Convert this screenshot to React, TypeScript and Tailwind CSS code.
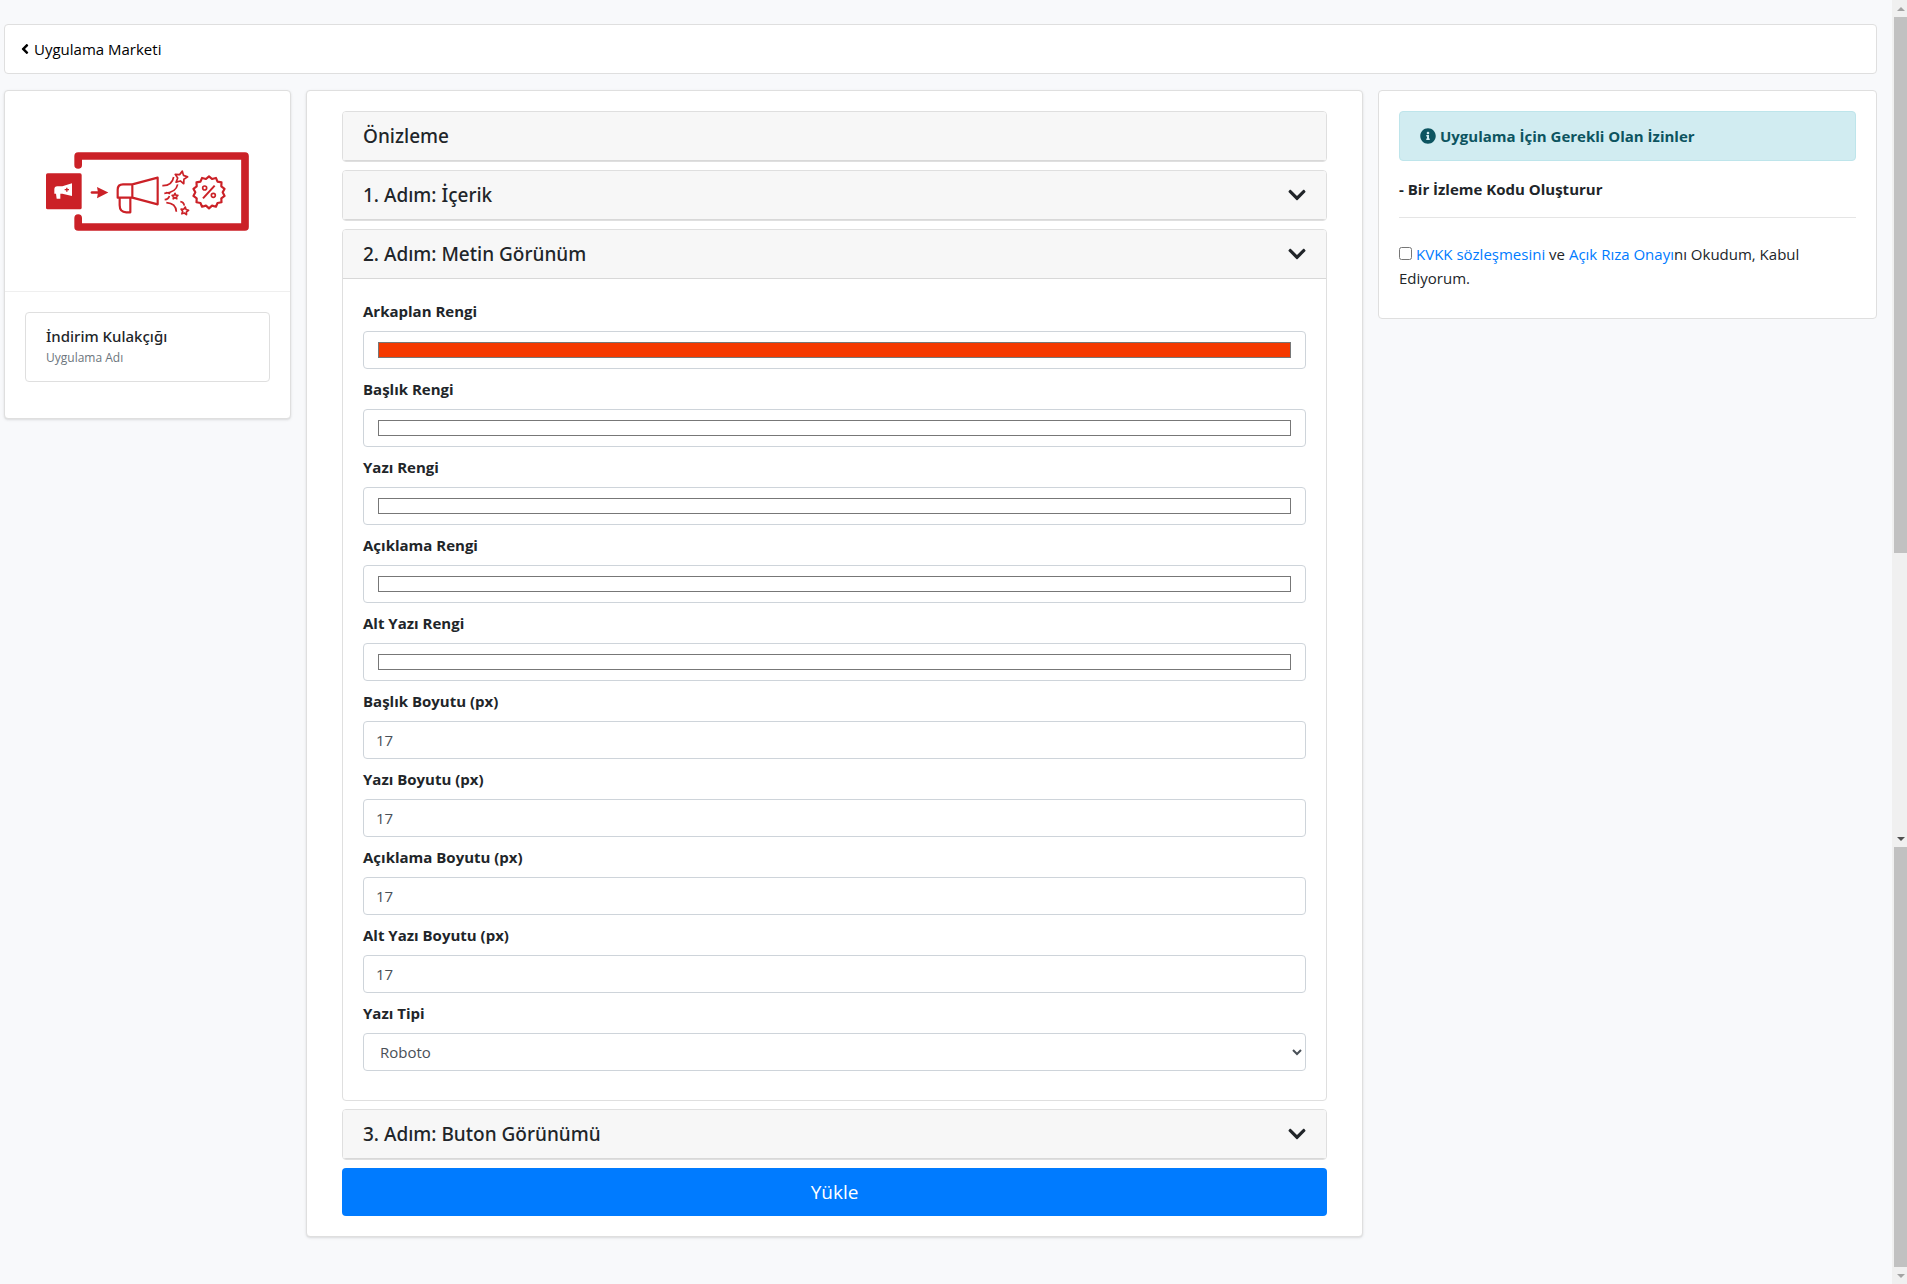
import { useState } from 'react';
import { FaAngleLeft, FaChevronDown, FaInfoCircle } from 'react-icons/fa';

const colorFields = [
  { id: 'bg-color', label: 'Arkaplan Rengi', value: '#f53900' },
  { id: 'title-color', label: 'Başlık Rengi', value: '#ffffff' },
  { id: 'text-color', label: 'Yazı Rengi', value: '#ffffff' },
  { id: 'desc-color', label: 'Açıklama Rengi', value: '#ffffff' },
  { id: 'sub-color', label: 'Alt Yazı Rengi', value: '#ffffff' },
];

const sizeFields = [
  { id: 'title-size', label: 'Başlık Boyutu (px)', value: 17 },
  { id: 'text-size', label: 'Yazı Boyutu (px)', value: 17 },
  { id: 'desc-size', label: 'Açıklama Boyutu (px)', value: 17 },
  { id: 'sub-size', label: 'Alt Yazı Boyutu (px)', value: 17 },
];

const labelClass = 'block mb-2 text-[15px] leading-6 font-bold';
const controlClass = 'block w-full h-[38px] mb-2 px-3 py-1.5 border border-[#ced4da] rounded bg-white text-[15px] leading-6 text-[#495057]';
const cardClass = 'bg-white border border-[#dfdfdf] rounded';
const stepCardClass = 'bg-white border border-[#dfdfdf] rounded overflow-hidden';
const stepHeaderClass = "flex w-full items-center justify-between px-5 py-3 bg-[#f7f7f7] border-b border-[#d8d8d8] font-['Noto_Sans','Open_Sans',sans-serif] text-[19px] leading-6 font-medium text-left";

// Wavy outline of the discount badge
const badgePoints = Array.from({ length: 28 }, (_, i) => {
  const r = i % 2 === 0 ? 48 : 41;
  const a = (i * Math.PI) / 14 - Math.PI / 2;
  return `${(537 + r * Math.cos(a)).toFixed(1)},${(184 + r * Math.sin(a)).toFixed(1)}`;
}).join(' ');

function starPoints(cx: number, cy: number, r: number, turn: number) {
  return Array.from({ length: 10 }, (_, i) => {
    const rad = i % 2 === 0 ? r : r * 0.5;
    const a = (i * Math.PI) / 5 - Math.PI / 2 + turn;
    return `${(cx + rad * Math.cos(a)).toFixed(1)},${(cy + rad * Math.sin(a)).toFixed(1)}`;
  }).join(' ');
}

function AppLogo() {
  return (
    <svg viewBox="48 63 609 237" className="w-[203px] h-[79px]" fill="none" stroke="#cb2127" role="img" aria-label="İndirim Kulakçığı">
      <path d="M144.500 102V75H645V288H144.500V261" strokeWidth="23" strokeLinecap="round" strokeLinejoin="round" />
      <rect x="48" y="127" width="107" height="108" rx="5" fill="#cb2127" stroke="none" />
      <path d="M73 175q0-9 9-9h15l29-9v38l-29-7h-6v15H80l-2-15h-5z" fill="#fff" stroke="none" />
      <path d="M104 176h13M110.500 170v12" strokeWidth="4" />
      <path d="M186 184.500h20" strokeWidth="8" strokeLinecap="round" />
      <path d="M201 168l34 16.500-34 17 3-17z" fill="#cb2127" stroke="none" />
      <g strokeWidth="6.500" strokeLinejoin="round">
        <path d="M307 160h-28q-16 0-16 16v24h44zM307 160l76-20v80l-76-20" />
        <path d="M269 201v22q0 21 20 21h12v-43" />
      </g>
      <g strokeWidth="5" strokeLinejoin="round">
        <polygon points={starPoints(453, 140, 20, 0.2)} />
        <polygon points={starPoints(435, 196, 9, 0)} />
        <polygon points={starPoints(464, 240, 12, 0.15)} />
      </g>
      <g strokeWidth="5">
        <path d="M397 164q29 1 34-26M403 187q35-2 40-27M404 206q12-1 14-11M408 185q8 0 12 4M409 215q29 2 30 27M451 212q10 1 12 12" />
      </g>
      <polygon points={badgePoints} strokeWidth="6.500" strokeLinejoin="round" />
      <path d="M519 202l35-38" strokeWidth="6" />
      <circle cx="524" cy="171" r="6" strokeWidth="5" />
      <circle cx="550" cy="193" r="6" strokeWidth="5" />
    </svg>
  );
}

function StepHeader({ title, open, onClick }: { title: string; open?: boolean; onClick?: () => void }) {
  return (
    <button type="button" onClick={onClick} aria-expanded={open} className={stepHeaderClass}>
      {title}
      <FaChevronDown className="w-[18px] h-5" />
    </button>
  );
}

function Scrollbar() {
  return (
    <div className="flex w-[15px] shrink-0 flex-col bg-[#f0f0f0] pl-0.5" aria-hidden="true">
      <div className="flex h-[17px] items-center justify-center">
        <svg viewBox="0 0 8 4" className="w-2 h-1" fill="#a3a3a3"><path d="M0 4L4 0l4 4z" /></svg>
      </div>
      <div className="grow-[536] bg-[#c1c1c1]" />
      <div className="grow-[277]" />
      <div className="flex h-[17px] items-center justify-center">
        <svg viewBox="0 0 8 4" className="w-2 h-1" fill="#505050"><path d="M0 0l4 4 4-4z" /></svg>
      </div>
      <div className="grow-[420] bg-[#c1c1c1]" />
      <div className="flex h-[17px] items-center justify-center">
        <svg viewBox="0 0 8 4" className="w-2 h-1" fill="#a3a3a3"><path d="M0 0l4 4 4-4z" /></svg>
      </div>
    </div>
  );
}

export default function App() {
  const [open, setOpen] = useState(true);

  return (
    <div className="flex min-h-screen bg-[#f8f9fb] font-['Open_Sans','Noto_Sans',sans-serif] text-[15px] leading-6 text-[#212529]">
      <main className="min-w-0 flex-1 pt-6 pl-1 pr-[15px]">
        <nav className={`${cardClass} flex mb-4 px-[15px] py-3`}>
          <a href="#market" className="flex items-center gap-1 text-black">
            <FaAngleLeft className="w-2.5 h-4" />
            Uygulama Marketi
          </a>
        </nav>

        <div className="grid grid-cols-[287fr_1057fr_499fr] items-start gap-[15px]">
          <aside className={`${cardClass} shadow-sm`}>
            <div className="flex h-[200px] items-center justify-center">
              <AppLogo />
            </div>
            <div className="border-t border-[#efefef] px-5 pt-5 pb-9">
              <div className={`${cardClass} px-5 py-3`}>
                <h6 className="font-['Noto_Sans','Open_Sans',sans-serif] text-[15px] leading-[22px] font-medium">İndirim Kulakçığı</h6>
                <p className="text-xs leading-[22px] text-[#6c757d]">Uygulama Adı</p>
              </div>
            </div>
          </aside>

          <section className={`${cardClass} px-[35px] py-5 shadow-sm`}>
            <div className="flex flex-col gap-2">
              <div className={stepCardClass}>
                <h5 className={stepHeaderClass}>Önizleme</h5>
              </div>
              <div className={stepCardClass}>
                <StepHeader title="1. Adım: İçerik" open={false} />
              </div>
              <div className={stepCardClass}>
                <StepHeader title="2. Adım: Metin Görünüm" open={open} onClick={() => setOpen(!open)} />
                {open && (
                  <form className="px-5 pt-5 pb-[21px]">
                    {colorFields.map((field) => (
                      <div key={field.id}>
                        <label htmlFor={field.id} className={labelClass}>{field.label}</label>
                        <input id={field.id} type="color" defaultValue={field.value} className={controlClass} />
                      </div>
                    ))}
                    {sizeFields.map((field) => (
                      <div key={field.id}>
                        <label htmlFor={field.id} className={labelClass}>{field.label}</label>
                        <input id={field.id} type="number" defaultValue={field.value} className={controlClass} />
                      </div>
                    ))}
                    <label htmlFor="font-family" className={labelClass}>Yazı Tipi</label>
                    <select id="font-family" className={controlClass}>
                      <option>Roboto</option>
                    </select>
                  </form>
                )}
              </div>
              <div className={stepCardClass}>
                <StepHeader title="3. Adım: Buton Görünümü" open={false} />
              </div>
              <button type="button" className="w-full h-12 rounded bg-[#007bff] text-[19px] text-white">
                Yükle
              </button>
            </div>
          </section>

          <aside className={`${cardClass} px-5 pt-5 pb-7`}>
            <div className="flex items-center gap-1 px-5 py-3 mb-4 border border-[#bee5eb] rounded bg-[#d1ecf1] font-bold text-[#0c5460]">
              <FaInfoCircle className="w-4 h-4" />
              Uygulama İçin Gerekli Olan İzinler
            </div>
            <p className="font-bold">- Bir İzleme Kodu Oluşturur</p>
            <hr className="mt-4 mb-6 border-[#e5e5e5]" />
            <div>
              <input id="consent" type="checkbox" className="w-[13px] h-[13px] mr-1" />
              <label htmlFor="consent">
                <a href="#kvkk" className="text-[#007bff]">KVKK sözleşmesini</a> ve{' '}
                <a href="#riza" className="text-[#007bff]">Açık Rıza Onayı</a>nı Okudum, Kabul Ediyorum.
              </label>
            </div>
          </aside>
        </div>
      </main>
      <Scrollbar />
    </div>
  );
}
